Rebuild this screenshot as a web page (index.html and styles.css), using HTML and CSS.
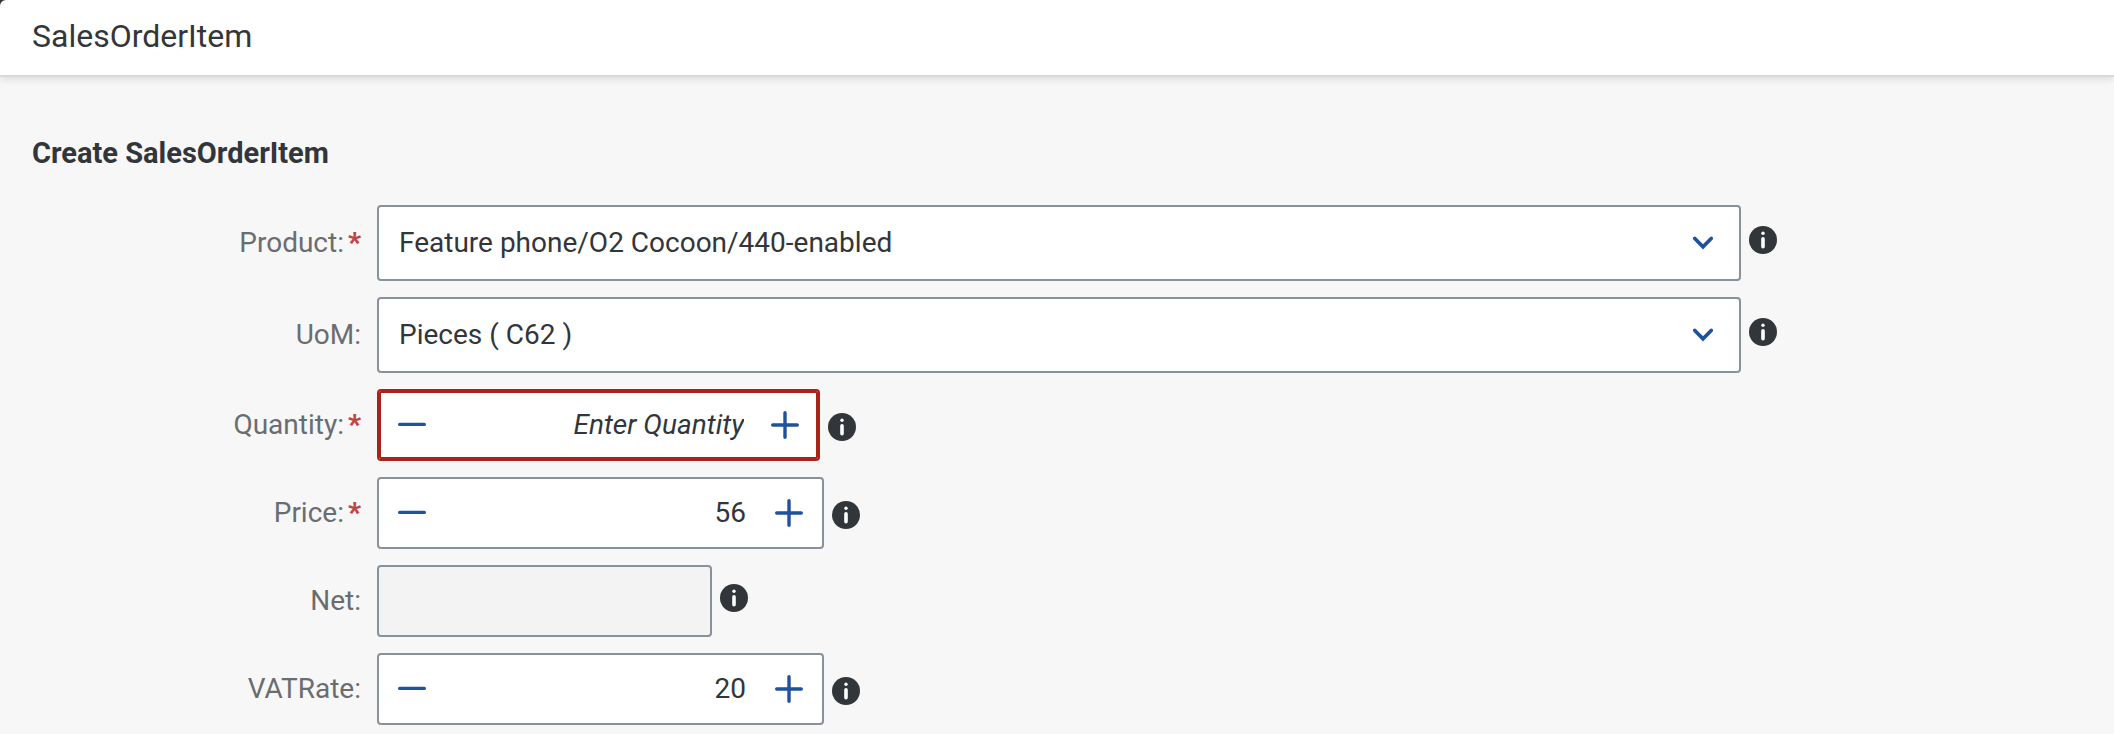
FILE: index.html
```html
<!DOCTYPE html>
<html lang="en">
<head>
<meta charset="utf-8">
<title>SalesOrderItem</title>
<link rel="stylesheet" href="styles.css">
</head>
<body>
<svg class="sprite" aria-hidden="true">
  <symbol id="info" viewBox="0 0 28 28"><circle cx="14" cy="14" r="14" fill="#32363a"/><circle cx="14" cy="7.3" r="1.7" fill="#fff"/><path d="M14 12.8V20.8" stroke="#fff" stroke-width="3.6" stroke-linecap="round"/></symbol>
  <symbol id="minus" viewBox="0 0 28 28"><path d="M1.7 13.4H26.3" stroke="#1f519f" stroke-width="3.4" stroke-linecap="round"/></symbol>
  <symbol id="plus" viewBox="0 0 28 28"><path d="M1.7 14H26.3M14 1.7V26.3" stroke="#1f519f" stroke-width="3.4" stroke-linecap="round"/></symbol>
  <symbol id="chevron" viewBox="0 0 20 14"><path d="M1.8 2.4L10 10.8L18.2 2.4" fill="none" stroke="#1f519f" stroke-width="3.6" stroke-linecap="round" stroke-linejoin="miter"/></symbol>
</svg>
<div class="shell">
  <header class="bar"><h1 class="title">SalesOrderItem</h1></header>
</div>
<main class="page">
  <h2 class="heading">Create SalesOrderItem</h2>
  <form class="form">
    <div class="row">
      <div class="name"><label for="product">Product:</label><span class="required">*</span></div>
      <div class="field">
        <div class="picker"><select id="product" class="select"><option>Feature phone/O2 Cocoon/440-enabled</option></select><svg class="chevron"><use href="#chevron"/></svg></div>
        <button type="button" class="info raised" aria-label="About Product"><svg><use href="#info"/></svg></button>
      </div>
    </div>
    <div class="row">
      <div class="name"><label for="uom">UoM:</label></div>
      <div class="field">
        <div class="picker"><select id="uom" class="select"><option>Pieces ( C62 )</option></select><svg class="chevron"><use href="#chevron"/></svg></div>
        <button type="button" class="info raised" aria-label="About UoM"><svg><use href="#info"/></svg></button>
      </div>
    </div>
    <div class="row">
      <div class="name"><label for="quantity">Quantity:</label><span class="required">*</span></div>
      <div class="field">
        <div class="stepper invalid"><button type="button" class="step" aria-label="Decrease"><svg><use href="#minus"/></svg></button><input id="quantity" class="value" type="text" placeholder="Enter Quantity"><button type="button" class="step" aria-label="Increase"><svg><use href="#plus"/></svg></button></div>
        <button type="button" class="info lowered" aria-label="About Quantity"><svg><use href="#info"/></svg></button>
      </div>
    </div>
    <div class="row">
      <div class="name"><label for="price">Price:</label><span class="required">*</span></div>
      <div class="field">
        <div class="stepper"><button type="button" class="step" aria-label="Decrease"><svg><use href="#minus"/></svg></button><input id="price" class="value" type="text" value="56"><button type="button" class="step" aria-label="Increase"><svg><use href="#plus"/></svg></button></div>
        <button type="button" class="info lowered" aria-label="About Price"><svg><use href="#info"/></svg></button>
      </div>
    </div>
    <div class="row">
      <div class="name"><label for="net">Net:</label></div>
      <div class="field">
        <input id="net" class="readonly" type="text" readonly>
        <button type="button" class="info raised" aria-label="About Net"><svg><use href="#info"/></svg></button>
      </div>
    </div>
    <div class="row">
      <div class="name"><label for="vat">VATRate:</label></div>
      <div class="field">
        <div class="stepper"><button type="button" class="step" aria-label="Decrease"><svg><use href="#minus"/></svg></button><input id="vat" class="value" type="text" value="20"><button type="button" class="step" aria-label="Increase"><svg><use href="#plus"/></svg></button></div>
        <button type="button" class="info lowered" aria-label="About VATRate"><svg><use href="#info"/></svg></button>
      </div>
    </div>
  </form>
</main>
</body>
</html>
```

FILE: styles.css
```css
* { box-sizing: border-box; }

body {
  margin: 0;
  background: #f7f7f7;
  color: #32363a;
  font: 28px/36px Roboto, "Liberation Sans", sans-serif;
}

button, input, select { font: inherit; color: inherit; }

.sprite { display: none; }

.shell {
  background: #32363a;
  box-shadow: 0 2px 8px rgba(0, 0, 0, 0.12);
}

.bar {
  padding: 16px 32px 19px;
  background: #fff;
  border-bottom: 2px solid #d9d9d9;
  border-top-left-radius: 6px;
}

.title {
  margin: 0;
  font-size: 32px;
  font-weight: 400;
  line-height: 40px;
}

.page { padding: 58px 32px 8px; }

.heading {
  margin: 0 0 34px;
  font-size: 29px;
  font-weight: 700;
  line-height: 36px;
}

.form {
  display: flex;
  flex-direction: column;
  gap: 16px;
}

.row {
  display: grid;
  grid-template-columns: 329px 1fr;
  gap: 16px;
  align-items: center;
}

.name {
  display: flex;
  justify-content: flex-end;
  color: #6a6d70;
}

.required {
  margin-left: 4px;
  color: #c14444;
  font-weight: 900;
}

.field {
  display: flex;
  align-items: center;
  gap: 8px;
}

.picker {
  position: relative;
  width: 80%;
}

.select {
  display: block;
  width: 100%;
  height: 76px;
  padding: 0 64px 0 20px;
  appearance: none;
  background: #fff;
  border: 2px solid #89919a;
  border-radius: 4px;
}

.chevron {
  position: absolute;
  right: 28px;
  top: 31px;
  width: 20px;
  height: 14px;
  pointer-events: none;
}

.stepper {
  display: flex;
  width: 447px;
  height: 72px;
  background: #fff;
  border: 2px solid #89919a;
  border-radius: 4px;
}

.invalid {
  width: 443px;
  border-color: #ab2218;
  box-shadow: inset 0 0 0 2px #ab2218;
}

.step {
  display: grid;
  place-items: center;
  width: 66px;
  padding: 0;
  background: none;
  border: 0;
}

.step svg { width: 28px; height: 28px; }

.value {
  flex: 1;
  min-width: 0;
  margin-right: 10px;
  padding: 0;
  background: none;
  border: 0;
  text-align: right;
}

.invalid .value { margin-right: 8px; }

.value::placeholder {
  color: #32363a;
  font-style: italic;
  opacity: 1;
}

.readonly {
  width: 335px;
  height: 72px;
  padding: 0 20px;
  background: #f3f3f3;
  border: 2px solid #89919a;
  border-radius: 4px;
}

.info {
  padding: 0;
  background: none;
  border: 0;
}

.info svg {
  display: block;
  width: 28px;
  height: 28px;
}

.raised { margin-bottom: 6px; }

.lowered { margin-top: 4px; }
```
